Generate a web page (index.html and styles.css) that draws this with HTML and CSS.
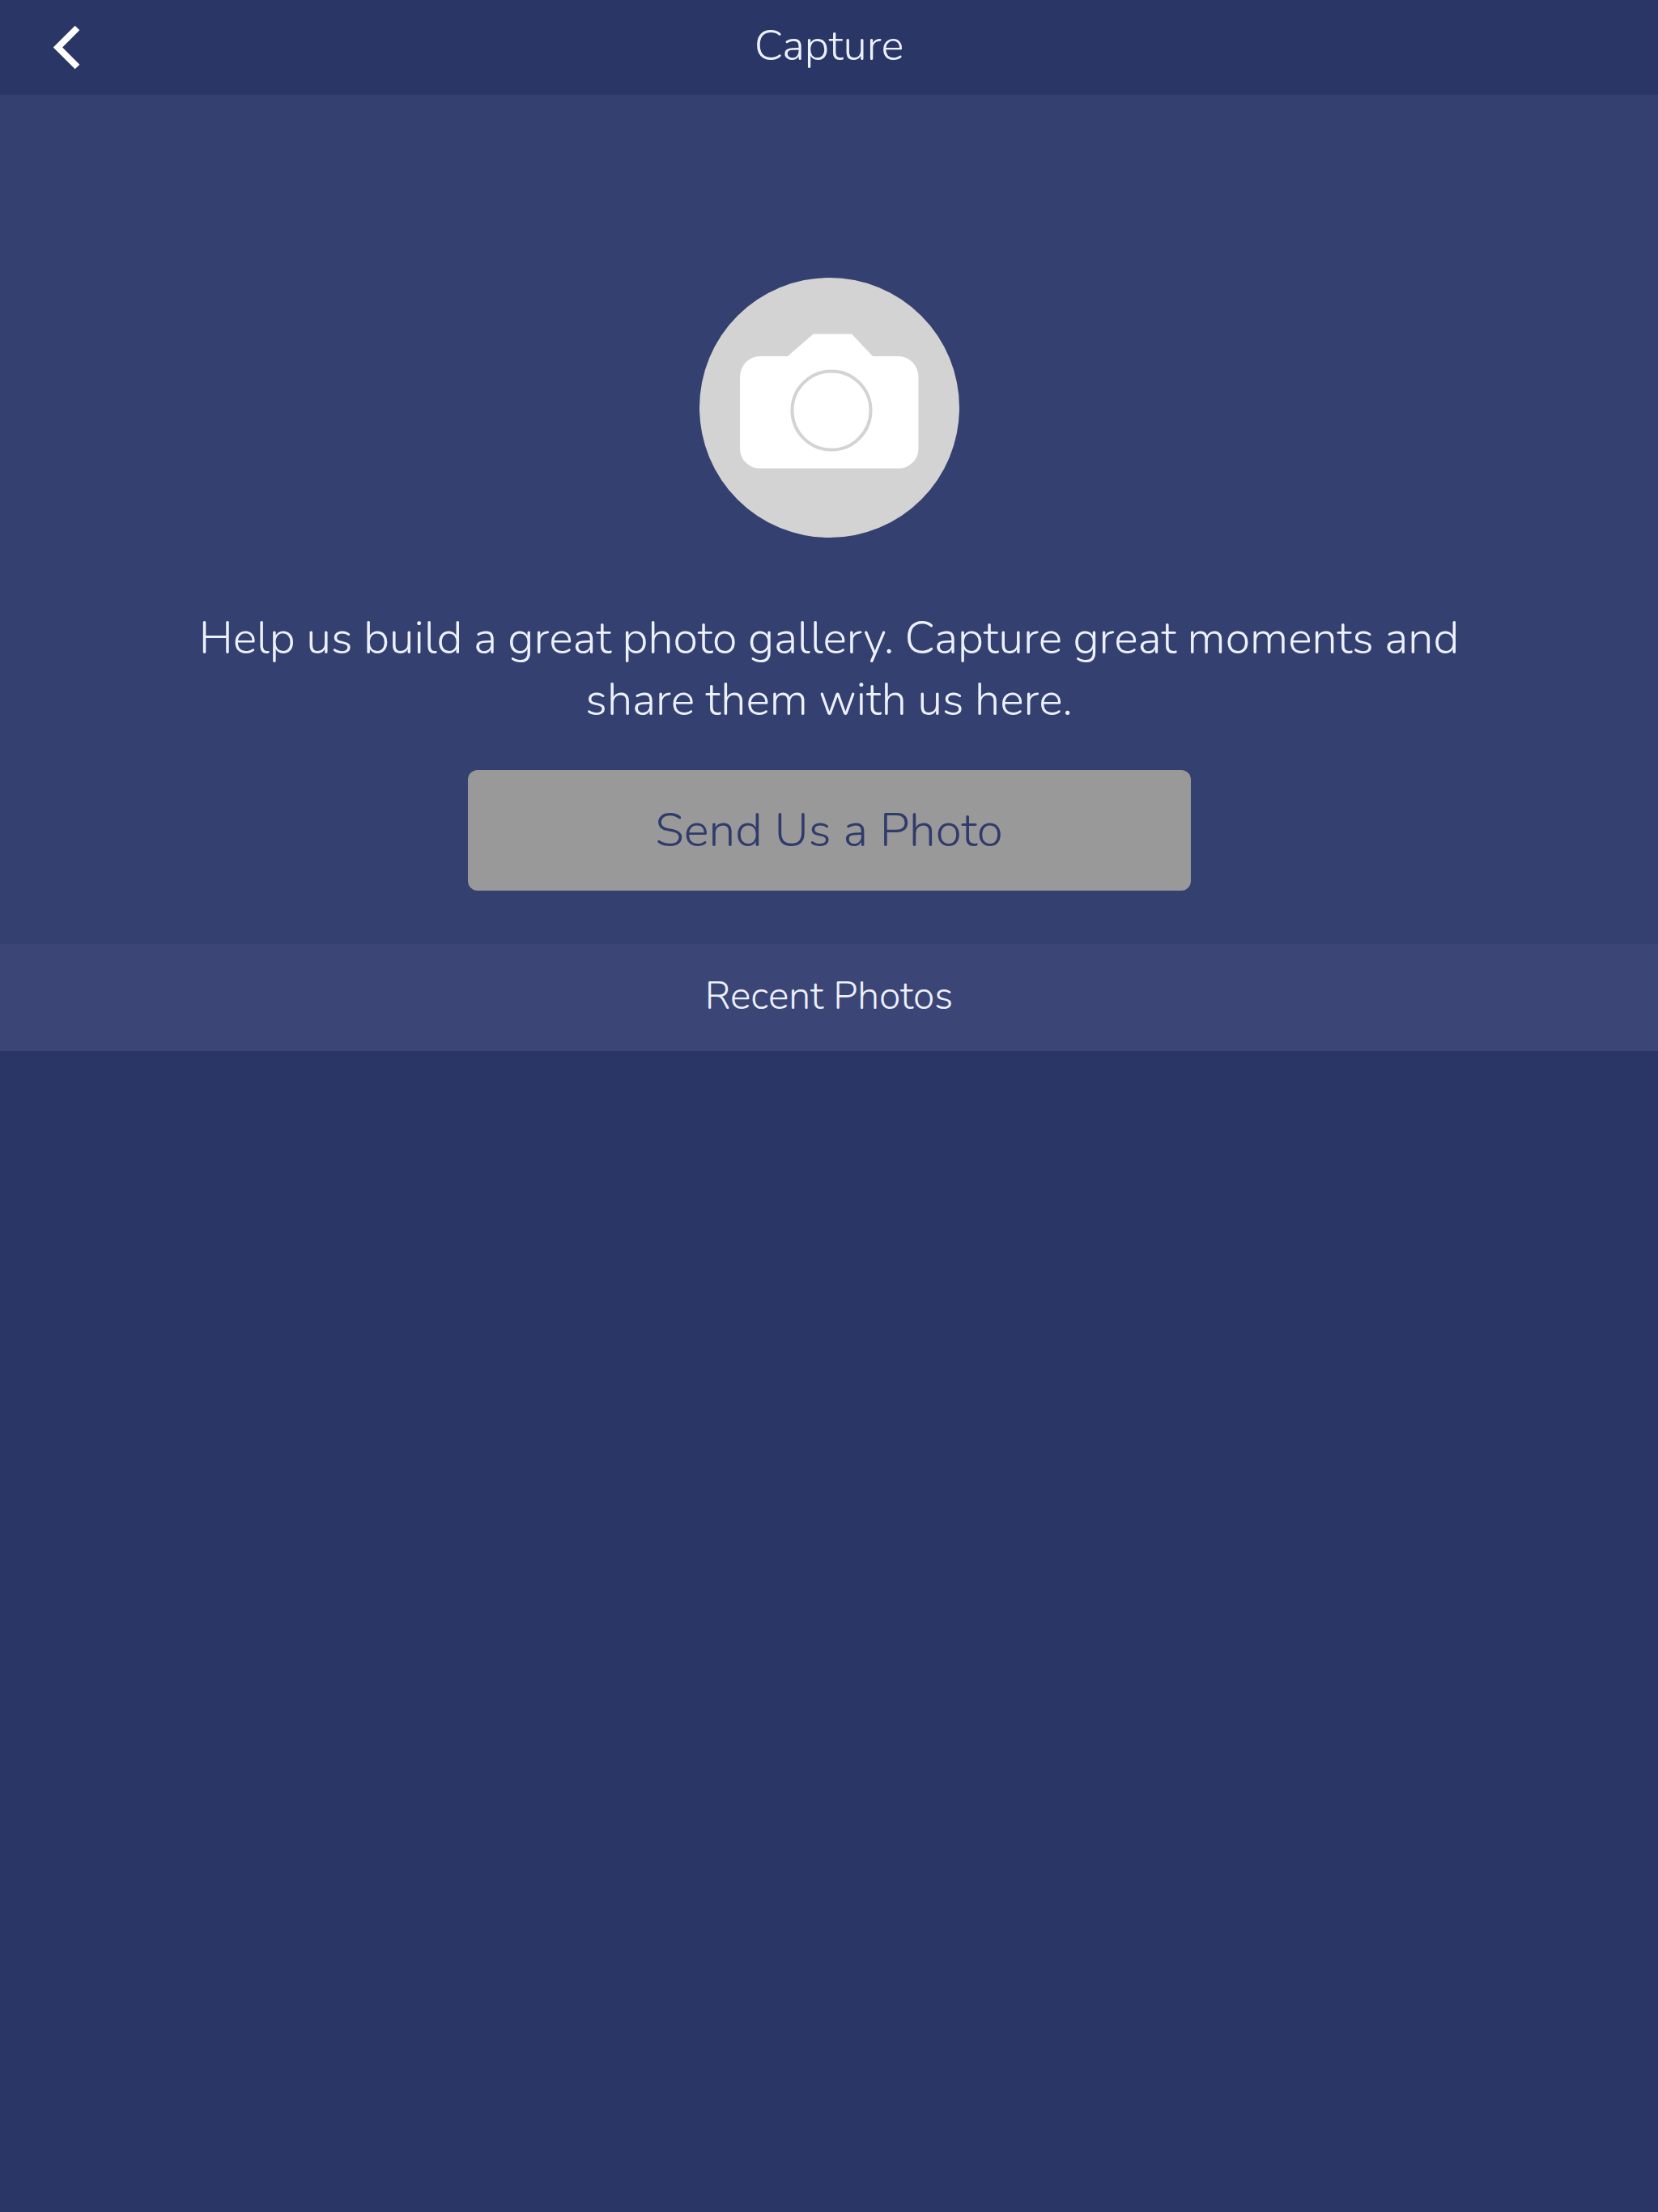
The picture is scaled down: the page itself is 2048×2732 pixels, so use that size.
FILE: index.html
```html
<!DOCTYPE html>
<html lang="en">
<head>
    <meta charset="UTF-8">
    <meta name="viewport" content="width=device-width, initial-scale=1.0">
    <title>Capture</title>
    <link rel="stylesheet" href="styles.css">
</head>
<body>
    <header class="navbar">
        <a class="back" href="#" aria-label="Back">
            <svg width="34" height="56" viewBox="0 0 34 56">
                <path d="M29.5 3.5 L5.5 27.5 L29.5 51.5" fill="none" stroke="#fff" stroke-width="8"/>
            </svg>
        </a>
        <h1 class="title">Capture</h1>
    </header>

    <section class="capture">
        <svg class="camera" width="321" height="321" viewBox="0 0 321 321">
            <circle cx="160.5" cy="160.5" r="160.5" fill="#d3d3d3"/>
            <path d="M74.5 97 H109 L140.5 69.5 H188 L214 97 H246 A24.5 26 0 0 1 270.5 123 V211 A24.5 24.5 0 0 1 246 235.5 H74.5 A24.5 24.5 0 0 1 50 211 V123 A24.5 26 0 0 1 74.5 97 Z" fill="#fff"/>
            <circle cx="163" cy="164" r="48.5" fill="#fff" stroke="#d3d3d3" stroke-width="4"/>
        </svg>
        <p class="message">Help us build a great photo gallery. Capture great moments and share them with us here.</p>
        <button class="send">Send Us a Photo</button>
    </section>

    <h2 class="recent">Recent Photos</h2>
</body>
</html>
```

FILE: styles.css
```css
body {
    margin: 0;
    min-height: 100vh;
    background-color: #2a3666;
    color: #edf0fd;
    font-family: Nunito, Lato, sans-serif;
    font-weight: 340;
    text-align: center;
}
.navbar {
    display: grid;
    grid-template-columns: 200px 1fr 200px;
    align-items: center;
    height: 117px;
}
.back {
    display: flex;
    padding-left: 66px;
}
.title {
    margin: 0;
    font-size: 52.8px;
    font-weight: inherit;
    line-height: 115px;
    height: 117px;
}
.capture {
    display: flex;
    flex-direction: column;
    align-items: center;
    box-sizing: border-box;
    height: 1049px;
    padding-top: 226px;
    background-color: #34406f;
}
.message {
    width: 1640px;
    margin: 87px 0 0;
    font-size: 55.6px;
    line-height: 76px;
    word-spacing: -0.6px;
}
.send {
    width: 893px;
    height: 149px;
    margin-top: 48px;
    padding: 0;
    border: none;
    border-radius: 12px;
    background-color: #999;
    color: #2f3b6b;
    font-family: inherit;
    font-size: 58.4px;
    font-weight: inherit;
}
.recent {
    height: 132px;
    margin: 0;
    background-color: #3b4676;
    font-size: 48px;
    font-weight: inherit;
    line-height: 129px;
}
```
